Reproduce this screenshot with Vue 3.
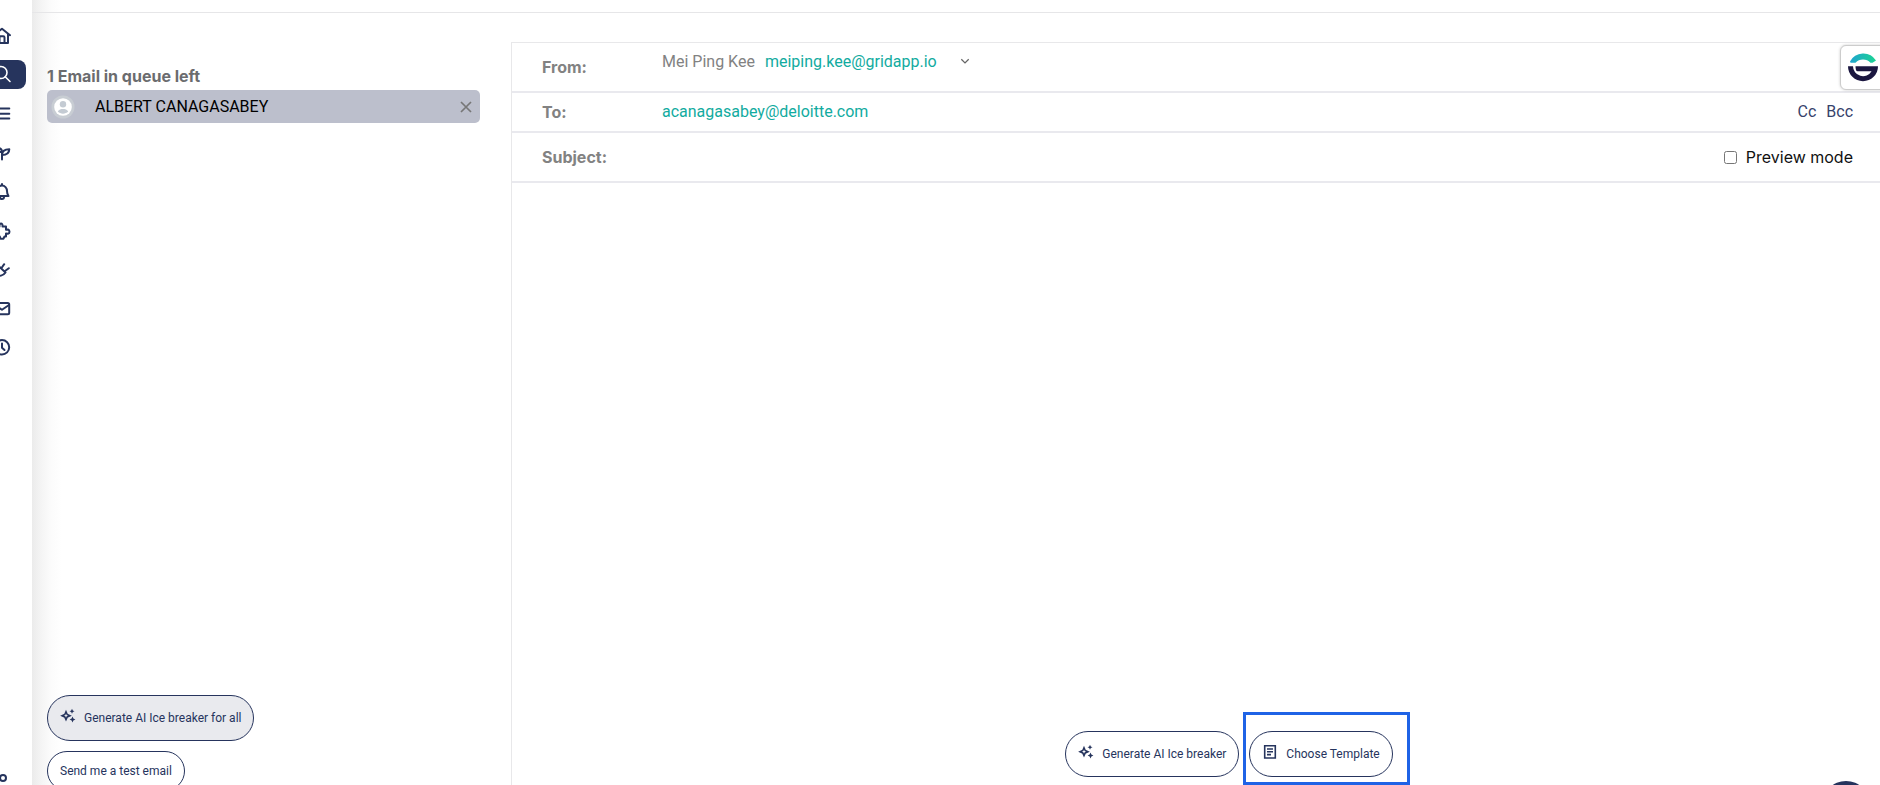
<template>
  <div class="page">
    <aside class="sidebar">
      <nav class="nav">
        <a v-for="item in navItems" :key="item.name" class="nav-item" :class="{ active: item.name === activeItem }">
          <svg class="nav-icon" viewBox="-10 -10 20 20">
            <path v-for="d in item.paths" :key="d" :d="d" />
          </svg>
        </a>
      </nav>
      <svg class="nav-settings" viewBox="-10 -10 20 20">
        <circle cx="0" cy="0" r="3" />
      </svg>
    </aside>

    <main class="content">
      <div class="topbar"></div>
      <div class="columns">
        <section class="queue">
          <h2 class="queue-title">{{ queue.length }} Email in queue left</h2>
          <div v-for="person in queue" :key="person" class="queue-item">
            <svg class="avatar" viewBox="0 0 24 24">
              <circle cx="12" cy="12" r="11.5" fill="#c8cdd3" />
              <circle cx="12" cy="12" r="8.8" fill="#fff" />
              <circle cx="12" cy="9.3" r="3.2" fill="#c4cbd3" />
              <path d="M6.8 16.6c1.2-2.2 3-2.7 5.2-2.7s4 .5 5.2 2.7c-1.4 1.5-3.2 2.1-5.2 2.1s-3.8-.6-5.2-2.1z" fill="#c4cbd3" />
            </svg>
            <span class="queue-name">{{ person }}</span>
            <svg class="remove" viewBox="0 0 12 12">
              <path d="M1 1l10 10M11 1L1 11" />
            </svg>
          </div>
          <div class="queue-actions">
            <button class="pill filled">
              <svg class="pill-icon" viewBox="0 0 16 16">
                <path class="line" d="M6 3.8l1.200 2.700 2.700 1.200-2.700 1.200L6 11.600 4.800 8.900 2.100 7.700l2.700-1.200z" />
                <path d="M12 .8l.8 1.700 1.700.8-1.700.8-.8 1.700-.8-1.700-1.700-.8 1.700-.8zM12.500 8.600l.9 2 2 .9-2 .9-.9 2-.9-2-2-.9 2-.9z" />
              </svg>
              Generate AI Ice breaker for all
            </button>
            <button class="pill small">Send me a test email</button>
          </div>
        </section>

        <section class="composer">
          <div class="row from">
            <span class="label">From:</span>
            <div class="sender">
              <span class="sender-name">Mei Ping Kee</span>
              <span class="email">meiping.kee@gridapp.io</span>
              <svg class="chevron" viewBox="0 0 10 10">
                <path d="M1.3 3.2L5 6.9l3.700-3.700" />
              </svg>
            </div>
          </div>
          <div class="row to">
            <span class="label">To:</span>
            <span class="email">acanagasabey@deloitte.com</span>
            <div class="copies">
              <a>Cc</a>
              <a>Bcc</a>
            </div>
          </div>
          <div class="row subject">
            <span class="label">Subject:</span>
            <label class="preview">
              <input v-model="previewMode" type="checkbox" />
              Preview mode
            </label>
          </div>
          <div class="editor"></div>
          <div class="composer-actions">
            <button class="pill">
              <svg class="pill-icon" viewBox="0 0 16 16">
                <path class="line" d="M6 3.8l1.200 2.700 2.700 1.200-2.700 1.200L6 11.600 4.800 8.900 2.100 7.700l2.700-1.200z" />
                <path d="M12 .8l.8 1.700 1.700.8-1.700.8-.8 1.700-.8-1.700-1.700-.8 1.700-.8zM12.500 8.600l.9 2 2 .9-2 .9-.9 2-.9-2-2-.9 2-.9z" />
              </svg>
              Generate AI Ice breaker
            </button>
            <div class="highlight">
              <button class="pill">
                <svg class="pill-icon" viewBox="0 0 16 16">
                  <path class="line" d="M2.700 1.700h10.600v12.300H2.700zM5 5h6M5 7.800h6M5 10.600h4" />
                </svg>
                Choose Template
              </button>
            </div>
          </div>
        </section>
      </div>
    </main>

    <div class="widget">
      <svg viewBox="0 0 30 30">
        <defs>
          <linearGradient id="arc" x1="0" x2="1" y1="0" y2="0">
            <stop offset="0" stop-color="#1fa4cf" />
            <stop offset="1" stop-color="#1bd493" />
          </linearGradient>
        </defs>
        <path d="M2 8.500A15 15 0 0 1 28 7.500L24.500 9.700H22.500A10.500 10.500 0 0 0 7.500 9.700H2.600z" fill="url(#arc)" />
        <path d="M0 13.200H5A10 10 0 0 0 23.600 18.300H9.500Q7.500 18.300 7.500 13.200H30A15 15 0 0 1 0 13.200z" fill="#1b1740" />
      </svg>
    </div>
    <div class="chat-bubble"></div>
  </div>
</template>

<script setup>
import { ref } from 'vue'

const activeItem = ref('search')
const previewMode = ref(false)
const queue = ref(['ALBERT CANAGASABEY'])

const navItems = [
  { name: 'home', paths: ['M-8-.8L0-7.3 8-.8M-6-2V7H6V-2', 'M-2.5 7V1.500Q-2.500.3-1.300.3H1.300Q2.500.3 2.500 1.500V7'] },
  { name: 'search', paths: ['M5-2.500A6 6 0 1 1-7-2.500A6 6 0 1 1 5-2.500', 'M3.200 1.800L8 6.500'] },
  { name: 'lists', paths: ['M-7-5.500H7.300M-7-.3H7.300M-7 4.500H7.300'] },
  { name: 'growth', paths: ['M0 6.500V-1', 'M0 2C0-2 3-3.700 7.300-3.700C7.300.5 4.500 2 0 2z', 'M0-1C0-4-3-5.500-7-5.500C-7-2-4-.5 0-1z'] },
  { name: 'alerts', paths: ['M-6.500 4H6.500Q5 2 5-1A5 5.500 0 0 0-5-1Q-5 2-6.500 4z', 'M-2 5Q-2 7 0 7T2 5M0-7V-8'] },
  { name: 'plugins', paths: ['M-5-4.500H-2.500C-3-8.500 1-8.500.5-4.500H4V-1.200L6-1.500Q7.500-.9 7.500.7T6 2.700L4 2.400V5.500H2.500L1.500 7.700H-1.500L-2.200 5.500H-5z'] },
  { name: 'connect', paths: ['M-3-3.500L3.500 2.500C1 6.200-3 6.500-5 4.500S-6-1-3-3.500z', 'M-.5-2L2.200-5.800M3 1L6.800-1.800M-5 4.500L-8 7.500'] },
  { name: 'mail', paths: ['M-5.700-6H5.700Q7.200-6 7.200-4.500V3.800Q7.200 5.300 5.700 5.300H-5.700Q-7.200 5.300-7.200 3.800V-4.500Q-7.200-6-5.700-6z', 'M-7-4L0 .8L7-4'] },
  { name: 'history', paths: ['M7.200-.7A7.200 7.200 0 1 1-7.200-.7A7.200 7.200 0 1 1 7.200-.7', 'M0-4.500V-.3L2.500 2'] }
]
</script>

<style>
body {
  overflow: hidden;
}
</style>

<style scoped>
.page {
  position: relative;
  display: flex;
  height: 785px;
  overflow: hidden;
  background: #fff;
  font-family: Roboto, sans-serif;
  font-size: 16px;
  line-height: 20px;
}

.sidebar {
  display: flex;
  flex-direction: column;
  justify-content: space-between;
  width: 32px;
  flex-shrink: 0;
  padding-top: 21px;
  box-sizing: border-box;
  overflow: hidden;
}

.nav {
  display: flex;
  flex-direction: column;
  gap: 9px;
  width: 48px;
  margin-left: -22px;
}

.nav-item {
  display: flex;
  align-items: center;
  justify-content: center;
  height: 30px;
  color: #26345d;
}

.nav-item.active {
  height: 29px;
  margin-bottom: 1px;
  background: #26345d;
  border-radius: 8px;
  color: #fff;
}

.nav-icon,
.nav-settings {
  width: 20px;
  height: 20px;
  fill: none;
  stroke: currentColor;
  stroke-width: 2;
  stroke-linecap: round;
  stroke-linejoin: round;
}

.nav-item.active .nav-icon {
  stroke-width: 1.6;
}

.nav-settings {
  margin: 0 0 -3px -7.5px;
  color: #26345d;
}

.content {
  display: flex;
  flex-direction: column;
  flex: 1;
  min-width: 0;
  background: linear-gradient(to right, #ebebeb, #f5f5f5 10px, #fcfcfc 20px, #fff 30px);
}

.topbar {
  height: 12px;
  border-bottom: 1px solid #e6e6e8;
}

.columns {
  display: flex;
  flex: 1;
  padding-top: 29px;
}

.queue {
  display: flex;
  flex-direction: column;
  width: 433px;
  padding: 24px 31px 0 15px;
}

.queue-title {
  margin: 0 0 4px;
  color: #6b6c6f;
  font-family: Inter, sans-serif;
  font-size: 16px;
  font-weight: 700;
  line-height: 20px;
}

.queue-item {
  display: flex;
  align-items: center;
  height: 33px;
  padding: 0 8px 0 4px;
  border-radius: 5px;
  background: #bcbfcc;
}

.avatar {
  width: 24px;
  height: 24px;
}

.queue-name {
  flex: 1;
  margin-left: 20px;
  color: #000;
}

.remove {
  width: 12px;
  height: 12px;
  fill: none;
  stroke: #777;
  stroke-width: 1.7;
}

.queue-actions {
  display: flex;
  flex-direction: column;
  align-items: flex-start;
  gap: 10px;
  margin: auto 0 -6px;
}

.pill {
  display: flex;
  align-items: center;
  height: 46px;
  padding: 0 12px;
  border: 1px solid #26345d;
  border-radius: 23px;
  background: #fff;
  color: #26345d;
  font-family: Roboto, sans-serif;
  font-size: 12px;
  white-space: nowrap;
}

.pill.filled {
  background: #e9eaee;
}

.pill.small {
  height: 40px;
}

.pill-icon {
  width: 16px;
  height: 16px;
  margin: -4px 8px 0 0;
  fill: currentColor;
}

.pill-icon .line {
  fill: none;
  stroke: currentColor;
  stroke-width: 1.6;
}

.composer {
  display: flex;
  flex-direction: column;
  flex: 1;
  border-top: 1px solid #e8e8ea;
  border-left: 1px solid #e8e8ea;
}

.row {
  display: flex;
  align-items: center;
  box-sizing: border-box;
  padding: 0 27px 0 30px;
  border-bottom: 2px solid #e9e9ee;
}

.row.from {
  height: 50px;
}

.row.to {
  height: 40px;
}

.row.subject {
  height: 50px;
}

.label {
  width: 120px;
  color: #828282;
  font-family: Inter, sans-serif;
  font-weight: 700;
}

.sender {
  display: flex;
  align-items: center;
  margin-top: -10px;
}

.sender-name {
  margin-right: 10px;
  color: #828282;
}

.email {
  color: #12aba0;
}

.chevron {
  width: 10px;
  height: 10px;
  margin: -2px 0 0 23px;
  fill: none;
  stroke: #666;
  stroke-width: 1.3;
}

.copies {
  display: flex;
  gap: 10px;
  margin-left: auto;
  color: #36426b;
}

.preview {
  display: flex;
  align-items: center;
  margin-left: auto;
  color: #111;
  font-family: Inter, sans-serif;
}

.preview input {
  width: 13px;
  height: 13px;
  margin: 0 9px 0 0;
}

.editor {
  flex: 1;
}

.composer-actions {
  display: flex;
  justify-content: center;
  align-items: flex-end;
  gap: 4px;
  padding-left: 83px;
}

.composer-actions > .pill {
  margin-bottom: 8px;
}

.highlight {
  padding: 16px 14px 5px 3px;
  border: 3px solid #1f63e6;
}

/* launcher tabs hanging over the right and bottom edges */
.widget {
  position: absolute;
  top: 45px;
  right: -8px;
  width: 46px;
  height: 43px;
  border: 1px solid #ccc;
  border-radius: 6px;
  background: #fff;
  box-shadow: 0 0 3px rgba(0, 0, 0, 0.2);
}

.widget svg {
  display: block;
  width: 30px;
  height: 30px;
  margin: 7px 0 0 7px;
}

.chat-bubble {
  position: absolute;
  right: 10px;
  bottom: -44px;
  width: 48px;
  height: 48px;
  border-radius: 50%;
  background: #26345d;
}
</style>
